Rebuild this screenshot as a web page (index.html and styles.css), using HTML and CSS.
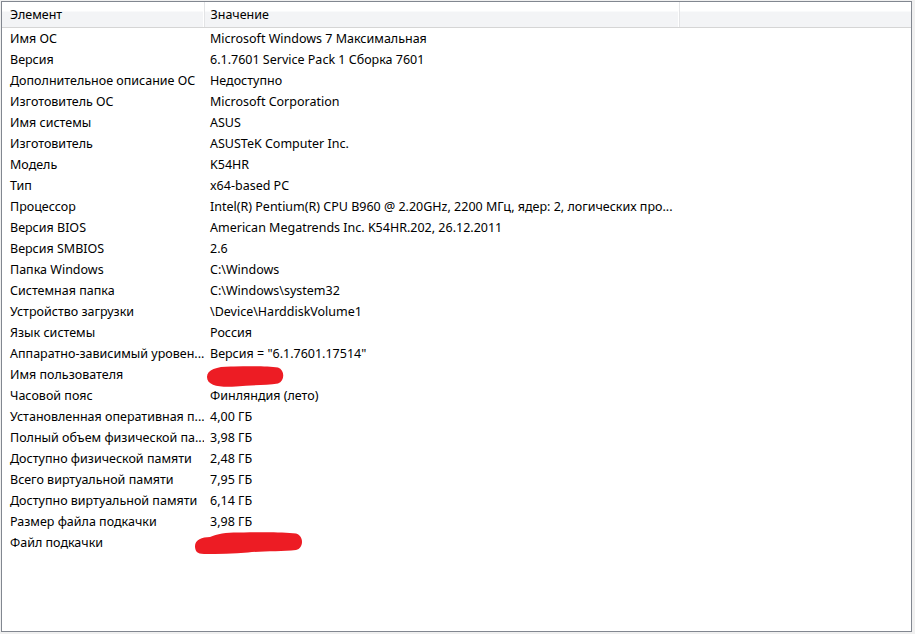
FILE: index.html
```html
<!DOCTYPE html>
<html lang="ru">
<head>
    <meta charset="UTF-8">
    <title>Сведения о системе</title>
    <link rel="stylesheet" href="styles.css">
</head>
<body>
    <div class="list">
        <table class="grid">
            <colgroup>
                <col class="col-name">
                <col class="col-value">
                <col>
            </colgroup>
            <thead>
                <tr>
                    <th>Элемент</th>
                    <th>Значение</th>
                    <th class="filler"></th>
                </tr>
            </thead>
            <tbody>
                <tr><td>Имя ОС</td><td>Microsoft Windows 7 Максимальная</td><td></td></tr>
                <tr><td>Версия</td><td>6.1.7601 Service Pack 1 Сборка 7601</td><td></td></tr>
                <tr><td>Дополнительное описание ОС</td><td>Недоступно</td><td></td></tr>
                <tr><td>Изготовитель ОС</td><td>Microsoft Corporation</td><td></td></tr>
                <tr><td>Имя системы</td><td>ASUS</td><td></td></tr>
                <tr><td>Изготовитель</td><td>ASUSTeK Computer Inc.</td><td></td></tr>
                <tr><td>Модель</td><td>K54HR</td><td></td></tr>
                <tr><td>Тип</td><td>x64-based PC</td><td></td></tr>
                <tr><td>Процессор</td><td>Intel(R) Pentium(R) CPU B960 @ 2.20GHz, 2200 МГц, ядер: 2, логических про...</td><td></td></tr>
                <tr><td>Версия BIOS</td><td>American Megatrends Inc. K54HR.202, 26.12.2011</td><td></td></tr>
                <tr><td>Версия SMBIOS</td><td>2.6</td><td></td></tr>
                <tr><td>Папка Windows</td><td>C:\Windows</td><td></td></tr>
                <tr><td>Системная папка</td><td>C:\Windows\system32</td><td></td></tr>
                <tr><td>Устройство загрузки</td><td>\Device\HarddiskVolume1</td><td></td></tr>
                <tr><td>Язык системы</td><td>Россия</td><td></td></tr>
                <tr><td>Аппаратно-зависимый уровен...</td><td>Версия = "6.1.7601.17514"</td><td></td></tr>
                <tr>
                    <td>Имя пользователя</td>
                    <td class="hidden-value">
                        <svg class="scribble user" width="78" height="22" viewBox="0 0 78 22">
                            <path d="M1 11 C1 3 12 0 28 0.5 C44 0 62 0 72 1.5 C79 4 79 15 72 17.5 C60 19.5 44 19 30 20.5 C14 21.5 1 20 1 11 Z" fill="#ed1c24"/>
                        </svg>
                    </td>
                    <td></td>
                </tr>
                <tr><td>Часовой пояс</td><td>Финляндия (лето)</td><td></td></tr>
                <tr><td>Установленная оперативная п...</td><td>4,00 ГБ</td><td></td></tr>
                <tr><td>Полный объем физической па...</td><td>3,98 ГБ</td><td></td></tr>
                <tr><td>Доступно физической памяти</td><td>2,48 ГБ</td><td></td></tr>
                <tr><td>Всего виртуальной памяти</td><td>7,95 ГБ</td><td></td></tr>
                <tr><td>Доступно виртуальной памяти</td><td>6,14 ГБ</td><td></td></tr>
                <tr><td>Размер файла подкачки</td><td>3,98 ГБ</td><td></td></tr>
                <tr>
                    <td>Файл подкачки</td>
                    <td class="hidden-value">
                        <svg class="scribble pagefile" width="110" height="23" viewBox="0 0 110 23">
                            <path d="M1 14 C1 8 8 5 16 5 C24 1 36 0 50 0.5 C68 0 90 0 102 1.5 C110 4 110 16 102 18 C88 19.5 68 19 54 20.5 C40 21.5 24 22 10 22 C3 22 1 19 1 14 Z" fill="#ed1c24"/>
                        </svg>
                    </td>
                    <td></td>
                </tr>
            </tbody>
        </table>
    </div>
</body>
</html>
```

FILE: styles.css
```css
html, body {
    margin: 0;
    padding: 0;
}
body {
    background: #f0f0f0;
    font-family: "Noto Sans", "Open Sans", sans-serif;
    font-size: 12.5px;
    color: #000;
}
.list {
    width: 909px;
    height: 629px;
    margin: 1px 0 0 1px;
    border: 1px solid #828790;
    background: #fff;
    overflow: hidden;
}
.grid {
    width: 100%;
    border-collapse: collapse;
    table-layout: fixed;
}
.col-name {
    width: 202px;
}
.col-value {
    width: 475px;
}
.grid th {
    height: 25px;
    padding: 0 0 0 8px;
    text-align: left;
    font-weight: normal;
    background: linear-gradient(#fff 0, #fff 9px, #f3f4f6 10px, #f3f4f6 100%);
    border-bottom: 1px solid #d5d5d5;
    border-right: 1px solid #e3e4e6;
    box-shadow: inset -1px 0 #fff;
    white-space: nowrap;
}
.grid th + th {
    padding-left: 6px;
}
.grid th.filler {
    border-right: none;
    box-shadow: none;
}
.grid td {
    height: 21px;
    padding: 0 0 0 8px;
    white-space: nowrap;
    overflow: hidden;
}
.grid td + td {
    padding-left: 6px;
}
.grid td.hidden-value {
    position: relative;
    overflow: visible;
}
/* paint-over marks on private values */
.scribble {
    position: absolute;
}
.scribble.user {
    left: 2px;
    top: 2px;
}
.scribble.pagefile {
    left: -10px;
    top: 0;
}
```
